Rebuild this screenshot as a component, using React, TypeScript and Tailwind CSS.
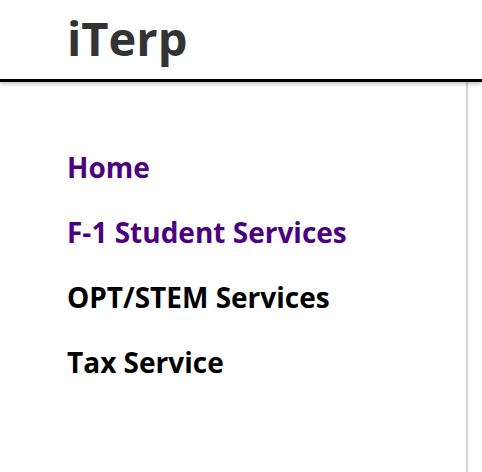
const NAV = [
  { label: 'Home', active: true },
  { label: 'F-1 Student Services', active: true },
  { label: 'OPT/STEM Services', active: false },
  { label: 'Tax Service', active: false },
]

export default function App() {
  return (
    <div className="h-[472px] w-[482px] overflow-hidden bg-white font-['Open_Sans',sans-serif]">
      <header className="relative z-10 h-[82px] border-b-[3px] border-black pl-[67px] shadow-[0_2px_4px_rgba(0,0,0,0.25)]">
        <h1 className="pt-[7px] text-[47px] font-bold leading-[62px] text-[#333]">iTerp</h1>
      </header>
      <div className="flex h-[390px]">
        <nav className="flex h-full w-[468px] flex-col gap-[27px] border-r-2 border-[#d3d3d3] pl-[67px] pt-[66px]">
          {NAV.map((n) => (
            <a
              key={n.label}
              href="#"
              className={`text-[28px] font-bold leading-[38px] ${n.active ? 'text-[#4b0082]' : 'text-black'}`}
            >
              {n.label}
            </a>
          ))}
        </nav>
      </div>
    </div>
  )
}
